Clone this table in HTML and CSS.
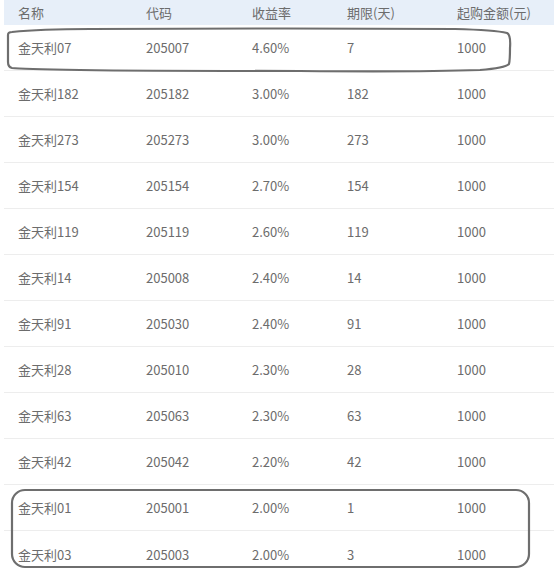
FILE: index.html
```html
<!DOCTYPE html>
<html lang="zh">
<head>
<meta charset="utf-8">
<link rel="stylesheet" href="styles.css">
</head>
<body>
<div class="page">
  <div class="table">
    <div class="row head"><span>名称</span><span>代码</span><span>收益率</span><span>期限(天)</span><span>起购金额(元)</span></div>
    <div class="row"><span>金天利07</span><span>205007</span><span>4.60%</span><span>7</span><span>1000</span></div>
    <div class="row"><span>金天利182</span><span>205182</span><span>3.00%</span><span>182</span><span>1000</span></div>
    <div class="row"><span>金天利273</span><span>205273</span><span>3.00%</span><span>273</span><span>1000</span></div>
    <div class="row"><span>金天利154</span><span>205154</span><span>2.70%</span><span>154</span><span>1000</span></div>
    <div class="row"><span>金天利119</span><span>205119</span><span>2.60%</span><span>119</span><span>1000</span></div>
    <div class="row"><span>金天利14</span><span>205008</span><span>2.40%</span><span>14</span><span>1000</span></div>
    <div class="row"><span>金天利91</span><span>205030</span><span>2.40%</span><span>91</span><span>1000</span></div>
    <div class="row"><span>金天利28</span><span>205010</span><span>2.30%</span><span>28</span><span>1000</span></div>
    <div class="row"><span>金天利63</span><span>205063</span><span>2.30%</span><span>63</span><span>1000</span></div>
    <div class="row"><span>金天利42</span><span>205042</span><span>2.20%</span><span>42</span><span>1000</span></div>
    <div class="row"><span>金天利01</span><span>205001</span><span>2.00%</span><span>1</span><span>1000</span></div>
    <div class="row last"><span>金天利03</span><span>205003</span><span>2.00%</span><span>3</span><span>1000</span></div>
  </div>
  <svg class="marks" width="554" height="578" viewBox="0 0 554 578">
    <path d="M8 35 Q8 32 12 32 Q40 29 90 29 Q300 28 455 29 Q495 30 507 33 Q511 35 510 48 Q510 60 509 64 Q505 68 480 70 Q420 72 300 71 Q150 71 80 70 Q20 69 12 68 Q8 67 8 62 Z" fill="none" stroke="#6e6e6e" stroke-width="2.2"/>
    <rect x="12" y="490" width="517" height="77" rx="13" ry="13" fill="none" stroke="#6e6e6e" stroke-width="2.2"/>
  </svg>
</div>
</body>
</html>
```
FILE: styles.css
```css
html, body {
  margin: 0;
  padding: 0;
  background: #ffffff;
}
.page {
  position: relative;
  width: 554px;
  height: 578px;
  overflow: hidden;
}
.table {
  margin-left: 4px;
  font-family: "Noto Sans CJK SC", "Microsoft YaHei", sans-serif;
  font-size: 13px;
  color: #6c6c6c;
}
.row {
  display: grid;
  grid-template-columns: 128px 106px 95px 110px 1fr;
  align-items: center;
  height: 46px;
  padding-left: 14px;
  box-sizing: border-box;
  border-bottom: 1px solid #ededed;
}
.row.head {
  height: 25px;
  background: #e7eff9;
  border-bottom: none;
}
.row.last {
  border-bottom: none;
}
.row span {
  white-space: nowrap;
  line-height: 1;
}
.marks {
  position: absolute;
  left: 0;
  top: 0;
  pointer-events: none;
}
```
